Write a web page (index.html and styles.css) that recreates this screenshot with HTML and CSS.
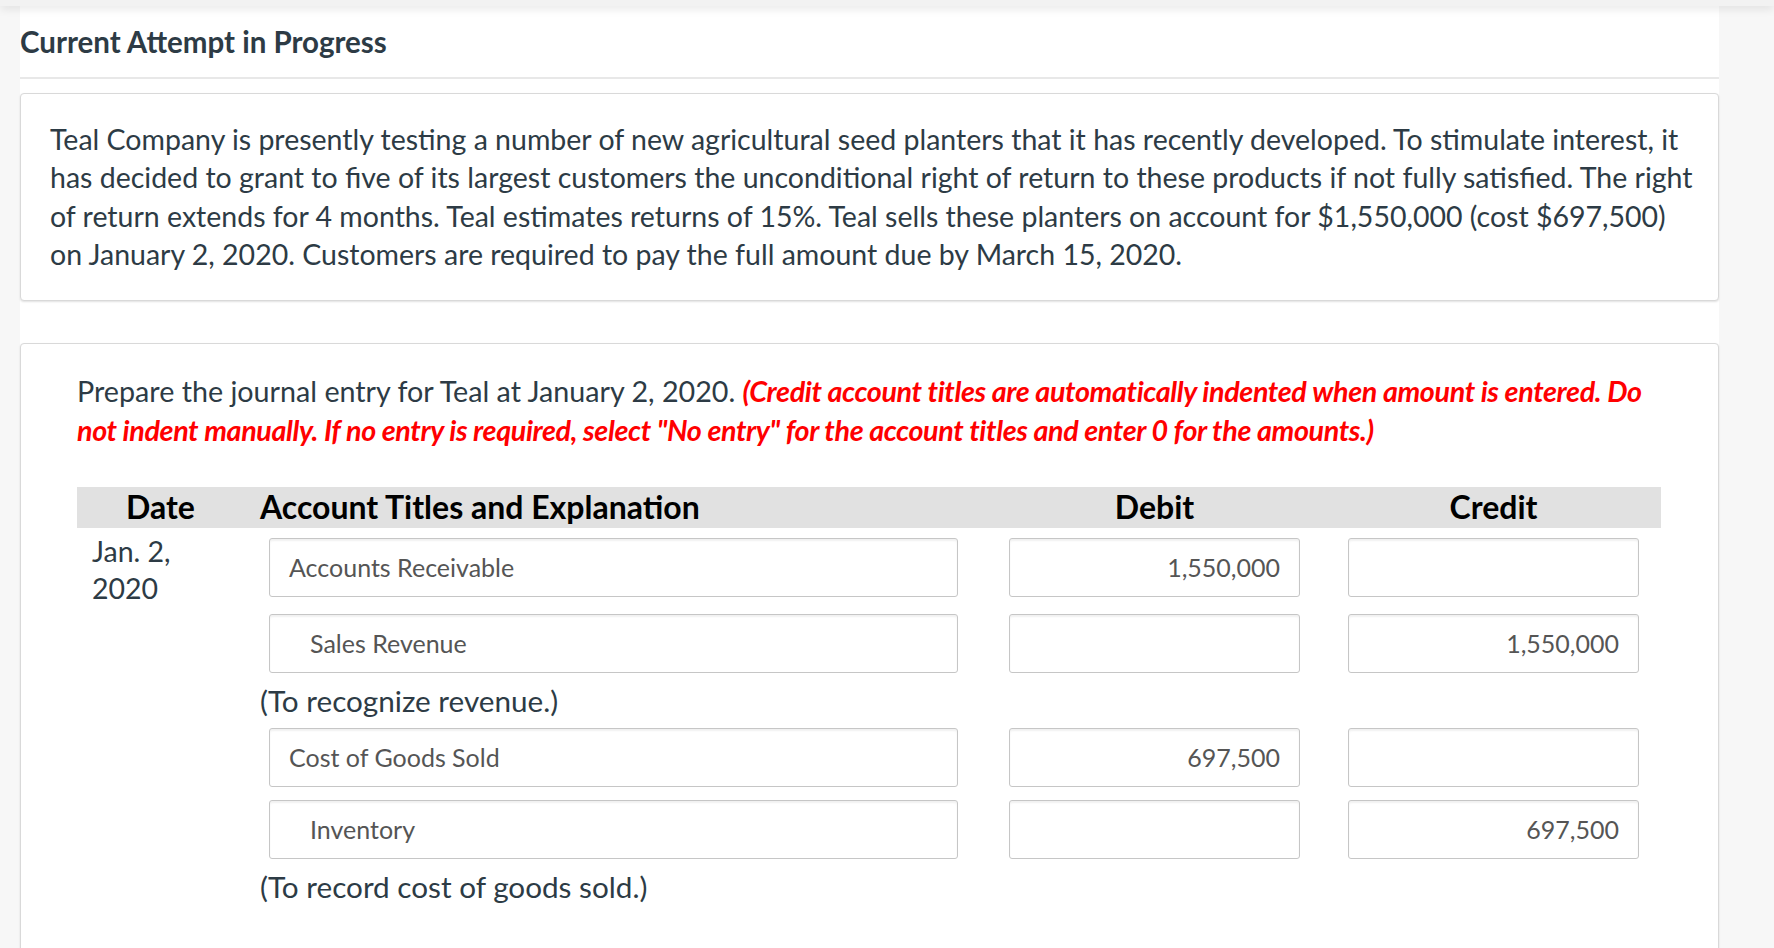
FILE: index.html
```html
<!DOCTYPE html>
<html lang="en">
<head>
<meta charset="utf-8">
<title>Current Attempt in Progress</title>
<link rel="stylesheet" href="styles.css">
</head>
<body>
<div class="topbar"></div>
<main class="main">
  <h2 class="attempt-title">Current Attempt in Progress</h2>
  <hr class="divider">
  <section class="card card-question">
    <p class="question-text">Teal Company is presently testing a number of new agricultural seed planters that it has recently developed. To stimulate interest, it has decided to grant to five of its largest customers the unconditional right of return to these products if not fully satisfied. The right of return extends for 4 months. Teal estimates returns of 15%. Teal sells these planters on account for $1,550,000 (cost $697,500) on January 2, 2020. Customers are required to pay the full amount due by March 15, 2020.</p>
  </section>
  <section class="card card-part">
    <p class="instructions">Prepare the journal entry for Teal at January 2, 2020. <em class="note">(Credit account titles are automatically indented when amount is entered. Do not indent manually. If no entry is required, select "No entry" for the account titles and enter 0 for the amounts.)</em></p>
    <div class="journal">
      <div class="journal-head">
        <div class="th th-date">Date</div>
        <div class="th th-account">Account Titles and Explanation</div>
        <div class="th th-center">Debit</div>
        <div class="th th-center">Credit</div>
      </div>
      <div class="journal-body">
        <div class="date-cell">Jan. 2,<br>2020</div>
        <div class="entries">
          <div class="entry-row row-first">
            <div class="acct"><div class="field">Accounts Receivable</div></div>
            <div class="amt"><div class="field num">1,550,000</div></div>
            <div class="amt"><div class="field num"></div></div>
          </div>
          <div class="entry-row row-second">
            <div class="acct"><div class="field credit">Sales Revenue</div></div>
            <div class="amt"><div class="field num"></div></div>
            <div class="amt"><div class="field num">1,550,000</div></div>
          </div>
          <div class="explanation">(To recognize revenue.)</div>
          <div class="entry-row row-after-expl">
            <div class="acct"><div class="field">Cost of Goods Sold</div></div>
            <div class="amt"><div class="field num">697,500</div></div>
            <div class="amt"><div class="field num"></div></div>
          </div>
          <div class="entry-row row-fourth">
            <div class="acct"><div class="field credit">Inventory</div></div>
            <div class="amt"><div class="field num"></div></div>
            <div class="amt"><div class="field num">697,500</div></div>
          </div>
          <div class="explanation expl-last">(To record cost of goods sold.)</div>
        </div>
      </div>
    </div>
  </section>
</main>
</body>
</html>
```
FILE: styles.css
```css
* {
  box-sizing: border-box;
}

html, body {
  margin: 0;
  padding: 0;
}

body {
  background: #f7f7f7;
  font-family: Lato, "Noto Sans", Arial, sans-serif;
  color: #2d3b45;
}

.topbar {
  position: relative;
  z-index: 2;
  height: 6px;
  background: #f2f2f2;
  box-shadow: 0 2px 10px rgba(0, 0, 0, 0.13);
}

.main {
  margin-left: 20px;
  width: 1699px;
  background: #ffffff;
  padding-top: 17px;
  padding-bottom: 80px;
}

.attempt-title {
  margin: 0;
  font-size: 29.5px;
  line-height: 38px;
  font-weight: 700;
  color: #2d3b45;
}

.divider {
  margin: 16px 0 0;
  border: 0;
  height: 2px;
  background: #e8e8e8;
}

.card {
  background: #fff;
  border: 1px solid #d9d9d9;
  border-radius: 4px;
  box-shadow: 0 1px 2px rgba(0, 0, 0, 0.12);
}

.card-question {
  margin-top: 14px;
  padding: 26px 20px 26px 29px;
}

.question-text {
  margin: 0;
  font-size: 28.5px;
  line-height: 38.4px;
}

.card-part {
  margin-top: 42px;
  padding: 28px 57px 200px 56px;
}

.instructions {
  margin: 0;
  font-size: 28.7px;
  line-height: 39px;
}

.note {
  color: #ff0000;
  font-style: italic;
  font-weight: 700;
  letter-spacing: -0.36px;
}

.journal {
  margin-top: 37px;
}

.journal-head {
  display: grid;
  grid-template-columns: 171px 736px 341px 337px;
  height: 41px;
  align-items: center;
  background: #e1e1e1;
}

.th {
  font-size: 32px;
  font-weight: 700;
  color: #000;
  line-height: 34px;
}

.th-date {
  text-align: center;
  padding-right: 4px;
}

.th-account {
  padding-left: 12px;
}

.th-center {
  text-align: center;
}

.journal-body {
  display: flex;
}

.date-cell {
  width: 171px;
  flex: none;
  padding: 5px 0 0 15px;
  font-size: 28.5px;
  line-height: 37px;
}

.entries {
  flex: 1;
  padding-top: 10px;
}

.entry-row {
  display: grid;
  grid-template-columns: 736px 341px 337px;
  height: 59px;
}

.row-second {
  margin-top: 17px;
}

.row-after-expl {
  margin-top: 8px;
}

.row-fourth {
  margin-top: 13px;
}

.acct {
  padding-left: 21px;
}

.amt {
  display: flex;
  justify-content: center;
}

.field {
  height: 59px;
  width: 689px;
  border: 1px solid #c6c6c6;
  border-radius: 3px;
  box-shadow: inset 0 2px 2px rgba(0, 0, 0, 0.06);
  padding: 0 19px;
  display: flex;
  align-items: center;
  font-size: 25px;
  color: #555;
  background: #fff;
}

.field.credit {
  padding-left: 40px;
}

.field.num {
  width: 291px;
  justify-content: flex-end;
}

.explanation {
  margin-top: 9px;
  padding-left: 12px;
  font-size: 29.7px;
  line-height: 38px;
}

.expl-last {
  margin-top: 9px;
}
```
